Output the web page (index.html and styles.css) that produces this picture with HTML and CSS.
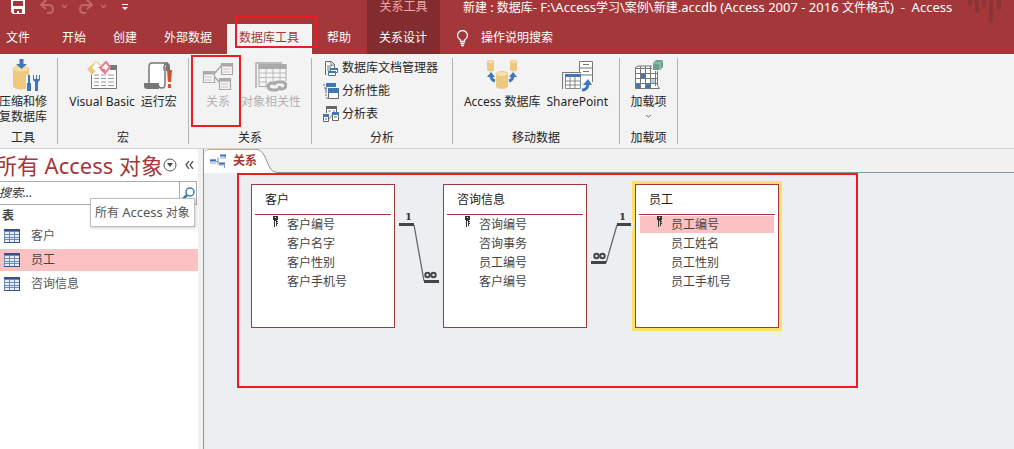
FILE: index.html
```html
<!DOCTYPE html>
<html lang="zh-CN">
<head>
<meta charset="utf-8">
<meta name="viewport" content="width=device-width, initial-scale=1">
<title>新建 - Access</title>
<link rel="stylesheet" href="styles.css">
</head>
<body>
<header class="header">
  <div class="header-main">
    <div class="quick">
      <button class="quick-btn save" aria-label="保存"><svg width="14" height="14" viewBox="0 0 14 14"><path d="M0 0h14v14H2l-2-2z" fill="#fff"/><path d="M2 1h10v5H2zM3 9h8v4H8v-2H6v2H3z" fill="#a4373a"/></svg></button>
      <button class="quick-btn undo" aria-label="撤消" disabled><svg width="28" height="14" viewBox="0 0 28 14" fill="none" stroke="#c4666a" stroke-width="2"><path d="M6 0L1 5l5 4M1 5h8q4 0 4 4t-4 4H7"/><path d="M22 5l2.500 2.500L27 5" stroke-width="1.500"/></svg></button>
      <button class="quick-btn redo" aria-label="恢复" disabled><svg width="28" height="14" viewBox="0 0 28 14" fill="none" stroke="#c4666a" stroke-width="2"><path d="M8 0l5 5-5 4M13 5H5q-4 0-4 4t4 4h2"/><path d="M22 5l2.500 2.500L27 5" stroke-width="1.500"/></svg></button>
      <button class="quick-btn" aria-label="自定义快速访问工具栏"><svg width="6" height="14" viewBox="0 0 6 14" fill="#fff"><path d="M0 4h6v1H0zM0 7h6L3 10z"/></svg></button>
    </div>
    <nav class="tabs" aria-label="功能区">
      <button class="tab tab-file">文件</button>
      <button class="tab">开始</button>
      <button class="tab">创建</button>
      <button class="tab">外部数据</button>
      <button class="tab tab-active">数据库工具<span class="mark mark-tab"></span></button>
      <button class="tab">帮助</button>
    </nav>
  </div>
  <div class="context">
    <div class="context-title">关系工具</div>
    <button class="tab context-tab">关系设计</button>
  </div>
  <div class="header-end">
    <h1 class="title">新建 <span class="latin">:</span> 数据库<span class="latin">- F:\Access</span>学习<span class="latin">\</span>案例<span class="latin">\</span>新建<span class="latin">.accdb (Access 2007 - 2016 </span>文件格式<span class="latin">) &nbsp;-&nbsp; Access</span></h1>
    <button class="tell"><svg width="13" height="17" viewBox="0 0 13 17" fill="none" stroke="#fff" stroke-width="1.300"><path d="M4.500 11.500V10Q1.500 8 1.500 5.500a5 5 0 0 1 10 0Q11.500 8 8.500 10v1.500zM4.500 13.500h4M5 15.500h3"/></svg>操作说明搜索</button>
    <svg class="decor" width="34" height="22" viewBox="0 0 34 22" fill="#8b3336"><path d="M0 0h4v6H0zM7 0h4v13H7zM14 0h4v7h-4zM21 0h4v22h-4zM29 0h4v10h-4z"/></svg>
  </div>
</header>

<section class="ribbon">
  <div class="group group-tools">
    <div class="group-body">
      <button class="big"><svg class="icon-tools" width="32" height="34" viewBox="0 0 32 34"><path d="M4 11v18q8 5 16 0V11z" fill="#eec87f"/><ellipse cx="12" cy="11" rx="8" ry="3" fill="#f7dfac" stroke="#eec87f"/><path d="M10.500 1h4v5H18l-5.500 5L7 6h3.500z" fill="#3f78b3"/><path d="M17 17h12v16H17z" fill="#f3f3f3"/><path d="M19 17h2v8h1v8h-4v-8h1zM24 17v4q0 2 2 3v9h3v-9q2-1 2-3v-4h-1v4h-2v-4h-1v4h-2v-4z" fill="#3f78b3"/></svg><span>压缩和修<br>复数据库</span></button>
    </div>
    <div class="group-name">工具</div>
  </div>
  <div class="group group-macro">
    <div class="group-body">
      <button class="big"><svg width="32" height="34" viewBox="0 0 32 34"><path d="M5.500 9.500h25v21h-25z" fill="#fff" stroke="#777"/><path d="M24 7h7v5h-7z" fill="#777"/><path d="M8 17h5m2 0h5m2 0h6M8 20.500h5m2 0h5m2 0h6M8 24h5m2 0h5m2 0h6M8 27.500h5m2 0h5m2 0h6" stroke="#999"/><path d="M1 11L10 3l4 5-8 9z" fill="#fff"/><path d="M1 11L10 3l5 4-9 10zM6 10l4 3 4-5-4-4z" fill="#eec87f" fill-rule="evenodd"/><path d="M15 9l5-5 4 5-5 6-4-4z" fill="#fff" stroke="#e67c91" stroke-width="2"/><path d="M14 10l5 1 1 5z" fill="#e67c91"/></svg><span>Visual Basic</span></button>
      <button class="big"><svg width="32" height="34" viewBox="0 0 32 34"><path d="M9 5h16q-4 0-4 5v16H6V9q0-4 3-4z" fill="#fff" stroke="#777" stroke-width="1.500"/><path d="M22 5q5-1 5 4v4h-4V8zM1 25h15v6H4q-3 0-3-3z" fill="#777"/><path d="M15 25q0 5 4 5 3 0 3-4V9" fill="#fff" stroke="#777" stroke-width="1.500"/><path d="M24 12h5l-1 12h-3zM25 26h3v4h-3z" fill="#d35230"/></svg><span>运行宏</span></button>
    </div>
    <div class="group-name">宏</div>
  </div>
  <div class="group group-relation">
    <div class="group-body">
      <button class="big" disabled><svg width="32" height="34" viewBox="0 0 32 34"><path d="M12 16l8-9M12 18l6 7" stroke="#aaa" stroke-width="1.500"/><g fill="#f7f3f7" stroke="#aaa" stroke-width="1.200"><path d="M1.500 13.500h11v11h-11zM19.500 5.500h11v11h-11zM17.500 20.500h11v11h-11z"/><path d="M1 15h12M19 7h12M17 22h12" stroke-width="3"/><path d="M3 19h7M3 22h7M21 11h7M21 14h7M19 26h7M19 29h7" stroke="#c9bfc9" stroke-width="1"/></g></svg><span>关系</span><i class="mark mark-button"></i></button>
      <button class="big" disabled><svg width="32" height="34" viewBox="0 0 32 34"><path d="M1 30V5h26" fill="none" stroke="#aaa" stroke-width="1.500"/><path d="M4 6.500h27v22H4z" fill="#f7f4f7" stroke="#aaa"/><path d="M3.500 6h28v5h-28z" fill="#aaa"/><path d="M11 11v17M18 11v17M25 11v17M4 15h27M4 19.500h27M4 24h27" stroke="#bbb"/><path d="M12 23h20v11H12z" fill="#f3f3f3"/><g fill="none" stroke="#aaa" stroke-width="3"><path d="M19 27q1-3 4-3h5q3 1 3 4-1 3-5 3l-3-1"/><path d="M25 28q-1 4-4 4h-4q-4-1-4-4 1-3 4-3h4"/></g></svg><span>对象相关性</span></button>
    </div>
    <div class="group-name">关系</div>
  </div>
  <div class="group group-analyze">
    <div class="group-body group-list">
      <button class="small"><svg width="16" height="16" viewBox="0 0 16 16"><path d="M3.500 14.500h-1V1.500h6l3 3V8" fill="#fff" stroke="#666"/><path d="M8 1v4h4M4 6h5M4 8h4M4 10h3" fill="none" stroke="#777"/><path d="M7.500 8.500h7v4h-7zM5.500 11.500h7v4h-7z" fill="#fff" stroke="#3f78b3"/><path d="M7 8h8v2H7zM5 11h8v2H5z" fill="#3f78b3"/></svg>数据库文档管理器</button>
      <button class="small"><svg width="16" height="16" viewBox="0 0 16 16"><path d="M3 0h10v4H3z" fill="#3f78b3"/><path d="M5.500 6.500h10v9h-10z" fill="#fff" stroke="#666"/><path d="M5 5h11v5H5z" fill="#3f78b3"/><path d="M0 2h2M1 5h3M3 5v3M2 9h2M3 11v2M3 15h2" stroke="#666"/></svg>分析性能</button>
      <button class="small"><svg width="16" height="16" viewBox="0 0 16 16"><path d="M3.500 7V.500h10V6" fill="#fff" stroke="#666"/><path d="M3 0h11v3H3z" fill="#666"/><path d="M5 5h3m2 0h2M6 13l3-4" stroke="#888"/><path d="M.500 8.500h5v7h-5zM9.500 6.500h6v8h-6z" fill="#fff" stroke="#666"/><path d="M0 8h6v3H0zM9 6h7v3H9z" fill="#3f78b3"/><path d="M2 13h2M11 11h3" stroke="#666"/></svg>分析表</button>
    </div>
    <div class="group-name">分析</div>
  </div>
  <div class="group group-move">
    <div class="group-body">
      <button class="big"><svg width="32" height="34" viewBox="0 0 32 34"><g fill="#eec87f"><path d="M1 4v8q4 3 7 0V4zM24 4v8q4 3 7 0V4zM10 16v13q6 4 12 0V16z"/></g><g fill="#f9e2b1" stroke="#eec87f"><ellipse cx="4.500" cy="4" rx="3.500" ry="1.500"/><ellipse cx="27.500" cy="4" rx="3.500" ry="1.500"/><ellipse cx="16" cy="16" rx="6" ry="2.500"/></g><path d="M5 17q0 5 4 6M27 17q0 5-4 6" fill="none" stroke="#3f78b3" stroke-width="3"/><path d="M1 19l4-5 4 5zM31 19l-4-5-4 5z" fill="#3f78b3"/></svg><span>Access 数据库</span></button>
      <button class="big"><svg width="32" height="34" viewBox="0 0 32 34"><path d="M18.500 3.500h13v21h-13zM18 10h13M18 17h13M22 6.500h6M22 13.500h6" fill="#fff" stroke="#777"/><path d="M2 15h18v16H2z" fill="#f3f3f3"/><path d="M1.500 31V14.500H20" fill="none" stroke="#777"/><path d="M4.500 16.500h15v14h-15zM9 19v11M14 19v11M4 23h15M4 27h15" fill="#fff" stroke="#888"/><path d="M4 16h16v3H4z" fill="#3f78b3"/><path d="M20 24h12v9H20z" fill="#f3f3f3"/><path d="M21 32q6 0 6-7" fill="none" stroke="#3f78b3" stroke-width="3"/><path d="M22 27l5-6 4 6z" fill="#3f78b3"/></svg><span>SharePoint</span></button>
    </div>
    <div class="group-name">移动数据</div>
  </div>
  <div class="group group-addin">
    <div class="group-body">
      <button class="big"><svg width="32" height="34" viewBox="0 0 32 34"><path d="M3.500 10.500h22v17l2 3h-24z" fill="#fff" stroke="#777"/><path d="M8.500 8v23M13.500 8v23M18.500 8v23M23.500 8v20M3 15.500h22M3 20.500h22M3 25.500h22M3 10l3-2h19" stroke="#777" fill="none"/><path d="M9 16h4v4H9zM4 26h4v4H4zM14 26h4v4h-4z" fill="#3f78b3"/><path d="M19 21h4v4h-4z" fill="#b6d0e8"/><path d="M20 3h12v10H20z" fill="#f3f3f3"/><path d="M21 5l3-3h7v7l-3 3h-7z" fill="#6d9f91"/><path d="M21 5h7v7M28 5l3-3" fill="none" stroke="#a2cbbf"/></svg><span>加载项</span><svg class="caret" width="5" height="3" viewBox="0 0 5 3"><path d="M0 0l2.500 2L5 0" fill="none" stroke="#666"/></svg></button>
    </div>
    <div class="group-name">加载项</div>
  </div>
</section>

<div class="work">
  <aside class="nav">
    <div class="nav-head">
      <h2 class="nav-title">所有 Access 对象</h2>
      <button class="nav-menu" aria-label="选择类别"><svg width="14" height="14" viewBox="0 0 14 14"><circle cx="7" cy="7" r="6" fill="#fff" stroke="#555"/><path d="M4 5h6L7 9z" fill="#444"/></svg></button>
      <button class="nav-fold" aria-label="收起导航窗格"><svg width="9" height="8" viewBox="0 0 9 8" fill="none" stroke="#555" stroke-width="1.300"><path d="M4 0L1 4l3 4M8 0L5 4l3 4"/></svg></button>
    </div>
    <div class="search">
      <input class="search-box" type="text" placeholder="搜索..." aria-label="搜索">
      <button class="search-go" aria-label="执行搜索"><svg width="13" height="13" viewBox="0 0 13 13" fill="none" stroke="#3f78b3"><circle cx="8" cy="5" r="4" stroke-width="1.500"/><path d="M5 8l-4 4" stroke-width="2.500"/></svg></button>
      <div class="tip" role="tooltip">所有 <span class="latin">Access</span> 对象</div>
    </div>
    <h3 class="nav-section">表</h3>
    <button class="item"><svg class="grid-icon" width="16" height="14" viewBox="0 0 16 14"><path d="M0 0h16v14H0z" fill="#6f88b8"/><path d="M0 0h16v2H0zM0 13h16v1H0zM15 0h1v14h-1z" fill="#36528c"/><path d="M1 3h4v2H1zM6 3h4v2H6zM11 3h4v2h-4zM1 6h4v2H1zM6 6h4v2H6zM11 6h4v2h-4zM1 9h4v1H1zM6 9h4v1H6zM11 9h4v1h-4zM1 11h4v2H1zM6 11h4v2H6zM11 11h4v2h-4z" fill="#e7effb"/></svg>客户</button>
    <button class="item item-active"><svg class="grid-icon" width="16" height="14" viewBox="0 0 16 14"><path d="M0 0h16v14H0z" fill="#6f88b8"/><path d="M0 0h16v2H0zM0 13h16v1H0zM15 0h1v14h-1z" fill="#36528c"/><path d="M1 3h4v2H1zM6 3h4v2H6zM11 3h4v2h-4zM1 6h4v2H1zM6 6h4v2H6zM11 6h4v2h-4zM1 9h4v1H1zM6 9h4v1H6zM11 9h4v1h-4zM1 11h4v2H1zM6 11h4v2H6zM11 11h4v2h-4z" fill="#e7effb"/></svg>员工</button>
    <button class="item"><svg class="grid-icon" width="16" height="14" viewBox="0 0 16 14"><path d="M0 0h16v14H0z" fill="#6f88b8"/><path d="M0 0h16v2H0zM0 13h16v1H0zM15 0h1v14h-1z" fill="#36528c"/><path d="M1 3h4v2H1zM6 3h4v2H6zM11 3h4v2h-4zM1 6h4v2H1zM6 6h4v2H6zM11 6h4v2h-4zM1 9h4v1H1zM6 9h4v1H6zM11 9h4v1h-4zM1 11h4v2H1zM6 11h4v2H6zM11 11h4v2h-4z" fill="#e7effb"/></svg>咨询信息</button>
  </aside>

  <main class="doc">
    <div class="doc-tabs">
      <button class="doc-tab"><svg class="doc-icon" width="16" height="15" viewBox="0 0 16 15"><path d="M0 6h6v3H0zM10 1h6v5h-6zM9 9h6v5H9z" fill="#fff"/><path d="M0 6h6M0 9h6M10 4h5.500V1M9 11h5.500v3" fill="none" stroke="#8aa0c5"/><path d="M10 1.500h6M9 9.500h6M0 6.500h6" stroke="#3f6fc0" stroke-width="2"/><path d="M6 7.500h2M8 3.500v7" stroke="#6f86ad" fill="none"/></svg>关系</button>
      <svg class="doc-slope" width="22" height="24" viewBox="0 0 22 24"><path d="M0 .500Q5 1 8 8l5 11q2 4 6 4.500V24H0z" fill="#fff"/><path d="M0 .500Q5 1 8 8l5 11q2 4 7 4.500h2" fill="none" stroke="#8d939c"/></svg>
      <div class="doc-line"></div>
    </div>
    <div class="canvas">
      <article class="table">
        <h4 class="table-name">客户</h4>
        <ul class="fields">
          <li class="field"><svg class="key" width="5" height="11" viewBox="0 0 5 11"><path d="M0 0h5v4H4v1h1v1H4v1h1v1H4v2H3V5H2v6H1V4H0z" fill="#333"/><path d="M2 1h1v1H2z" fill="#fff"/></svg>客户编号</li>
          <li class="field">客户名字</li>
          <li class="field">客户性别</li>
          <li class="field">客户手机号</li>
        </ul>
      </article>
      <article class="table">
        <h4 class="table-name">咨询信息</h4>
        <ul class="fields">
          <li class="field"><svg class="key" width="5" height="11" viewBox="0 0 5 11"><path d="M0 0h5v4H4v1h1v1H4v1h1v1H4v2H3V5H2v6H1V4H0z" fill="#333"/><path d="M2 1h1v1H2z" fill="#fff"/></svg>咨询编号</li>
          <li class="field">咨询事务</li>
          <li class="field">员工编号</li>
          <li class="field">客户编号</li>
        </ul>
      </article>
      <article class="table table-active">
        <h4 class="table-name">员工</h4>
        <ul class="fields">
          <li class="field field-active"><svg class="key" width="5" height="11" viewBox="0 0 5 11"><path d="M0 0h5v4H4v1h1v1H4v1h1v1H4v2H3V5H2v6H1V4H0z" fill="#333"/><path d="M2 1h1v1H2z" fill="#fff"/></svg>员工编号</li>
          <li class="field">员工姓名</li>
          <li class="field">员工性别</li>
          <li class="field">员工手机号</li>
        </ul>
      </article>
      <svg class="links" width="240" height="80" viewBox="0 0 240 80">
        <path d="M218 12h16v7h-16z" fill="#ebeff2"/>
        <path d="M15 15l10 56M207 53l11-38" fill="none" stroke="#666" stroke-width="1.300"/>
        <path d="M0 13h15v3H0zM25 70h15v3H25zM192 51h15v3h-15zM218 13h14v3h-14z" fill="#444"/>
        <g fill="none" stroke="#444" stroke-width="2"><circle cx="28.500" cy="65" r="2.200"/><circle cx="34.500" cy="65" r="2.200"/><circle cx="197.500" cy="46" r="2.200"/><circle cx="203.500" cy="46" r="2.200"/></g>
        <text class="one" x="6" y="10">1</text><text class="one" x="220" y="10">1</text>
      </svg>
      <div class="mark mark-canvas"></div>
    </div>
  </main>
</div>
</body>
</html>
```

FILE: styles.css
```css
* { box-sizing: border-box; }
body {
  margin: 0;
  min-height: 100vh;
  display: flex;
  flex-direction: column;
  overflow: hidden;
  font: 12px/16px "Noto Sans", "Noto Sans CJK SC", sans-serif;
  color: #262626;
  background: #f1f1f1;
}
button {
  margin: 0;
  padding: 0;
  border: 0;
  background: none;
  color: inherit;
  font: inherit;
  white-space: nowrap;
}
h1, h2, h3, h4, ul { margin: 0; padding: 0; font-weight: 400; list-style: none; }
svg { display: block; flex: none; }
.latin { font-size: 13px; }
.mark { position: absolute; border: 2px solid #ed1c24; pointer-events: none; z-index: 3; }

.header { display: flex; background: #a4373a; color: #fff; }
.header-main { width: 367px; flex: none; }
.quick { height: 24px; display: flex; align-items: flex-start; padding-left: 11px; }
.save { margin-right: 15px; }
.undo { margin-right: 11px; }
.redo { margin-right: 15px; }
.tabs { display: flex; gap: 3px; }
.tab { height: 30px; padding: 0 12px 2px; }
.tab-file { padding: 0 17px 2px 6px; }
.tab-active { position: relative; padding-right: 13px; background: #f3f3f3; color: #a4373a; }
.mark-tab { left: 8px; right: -5px; top: -8px; bottom: 6px; }
.context { width: 73px; flex: none; background: #822c2f; }
.context-title { height: 24px; line-height: 14px; text-align: center; color: #f0a9ab; }
.header-end { position: relative; flex: 1; min-width: 0; padding-left: 16px; }
.title { height: 24px; padding-left: 7px; font-size: 12px; line-height: 14px; white-space: nowrap; }
.tell { height: 30px; display: flex; align-items: center; gap: 12px; padding-bottom: 2px; }
.decor { position: absolute; right: 12px; top: 0; }

.ribbon { display: flex; padding: 4px 0; background: #f3f3f3; border-bottom: 1px solid #d2d2d2; }
.group { display: flex; flex-direction: column; border-right: 1px solid #b4b4b4; }
.group-body { height: 72px; display: flex; justify-content: center; gap: 6px; }
.group-name { height: 14px; line-height: 15px; text-align: center; }
.group-tools { width: 58px; padding-right: 11px; }
.group-macro { width: 131px; }
.group-relation { width: 123px; }
.group-relation .group-body { gap: 7px; padding-left: 3px; }
.group-analyze { width: 141px; }
.group-move { width: 167px; }
.group-addin { width: 58px; }
.big { position: relative; display: flex; flex-direction: column; align-items: center; line-height: 15px; }
.big span { margin-top: 2px; }
.big:disabled { color: #b1b1b1; }
.icon-tools { margin-left: 4px; }
.mark-button { left: -11px; right: -7px; top: -3px; height: 72px; }
.caret { margin-top: 6px; }
.group-list { flex-direction: column; justify-content: flex-start; align-items: flex-start; gap: 7px; padding: 2px 0 0 11px; }
.small { height: 16px; display: flex; align-items: center; gap: 3px; }

.work { flex: 1; display: flex; }
.nav { width: 198px; flex: none; background: #fff; color: #444; overflow-x: clip; }
.nav-head { height: 32px; display: flex; align-items: center; justify-content: flex-end; }
.nav-title { font-size: 22px; line-height: 30px; color: #a4373a; white-space: nowrap; }
.nav-fold { margin: 0 4px 0 8px; }
.search { position: relative; height: 24px; margin-right: 1px; display: flex; border: 1px solid #ababab; border-left: 0; }
.search-box { flex: 1; min-width: 0; border: 0; padding: 0; margin-left: -1px; font: italic 12px/16px "Noto Sans", "Noto Sans CJK SC", sans-serif; outline: 0; }
.search-box::placeholder { color: #333; opacity: 1; }
.search-go { width: 17px; display: grid; place-items: center; border-left: 1px solid #ababab; }
.tip { position: absolute; left: 90px; top: 16px; z-index: 4; padding: 5px 4px; white-space: nowrap; color: #555; background: #fff; border: 1px solid #bebebe; box-shadow: 1px 1px 3px #0003; }
.nav-section { padding: 3px 2px 0; height: 20px; font-size: 12px; font-weight: 700; }
.item { width: 100%; height: 22px; margin-bottom: 2px; padding-left: 4px; display: flex; align-items: center; gap: 11px; color: #555; }
.item-active { background: #fcc1c3; color: #444; }

.doc { flex: 1; min-width: 0; display: flex; flex-direction: column; margin-left: 5px; border-left: 1px solid #8d939c; }
.doc-tabs { height: 24px; display: flex; }
.doc-tab { display: flex; align-items: center; gap: 7px; padding: 0 0 1px 6px; font-weight: 700; color: #a4373a; background: #fff; border-top: 1px solid #c7a98a; border-top-left-radius: 6px; }
.doc-slope { margin-right: -1px; }
.doc-line { flex: 1; border-bottom: 1px solid #8d939c; }
.canvas { position: relative; flex: 1; display: flex; align-items: flex-start; gap: 48px; padding: 11px 0 0 47px; background: #ebeff2; }
.mark-canvas { left: 33px; top: 0; width: 621px; height: 215px; }
.table { width: 144px; min-height: 144px; flex: none; padding: 0 3px; background: #fff; border: 1px solid #a4373a; }
.table-active { box-shadow: 0 0 0 3px #ffdf65; }
.table-name { height: 30px; padding-left: 10px; font-size: 12px; line-height: 30px; border-bottom: 1px solid #a4373a; color: #222; }
.fields { padding: 1px; color: #444; }
.field { position: relative; height: 17px; margin-bottom: 2px; padding-left: 31px; line-height: 17px; }
.field-active { background: #fcc1c3; }
.key { position: absolute; left: 17px; top: 0; }
.links { position: absolute; left: 195px; top: 37px; }
.one { font: 700 10px "DejaVu Serif", serif; fill: #333; }
```
